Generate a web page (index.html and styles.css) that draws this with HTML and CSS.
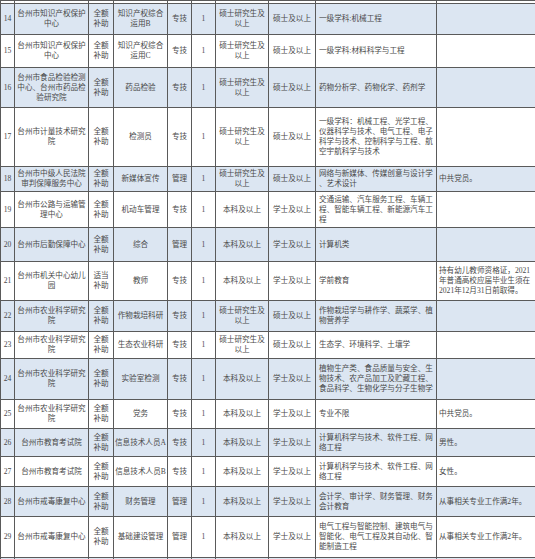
FILE: index.html
```html
<!DOCTYPE html>
<html lang="zh-CN">
<head>
<meta charset="utf-8">
<title>招聘计划表</title>
<link rel="stylesheet" href="styles.css">
</head>
<body>
<table class="grid">
<colgroup>
<col class="c-no"><col class="c-unit"><col class="c-fund"><col class="c-post"><col class="c-type"><col class="c-num"><col class="c-edu"><col class="c-deg"><col class="c-major"><col class="c-other">
</colgroup>
<tbody>
<tr class="h-top"><td></td><td></td><td></td><td></td><td></td><td></td><td></td><td></td><td></td><td></td></tr>
<tr class="blue h31"><td>14</td><td>台州市知识产权保护<br>中心</td><td>全额<br>补助</td><td>知识产权综合<br>运用B</td><td>专技</td><td>1</td><td>硕士研究生及<br>以上</td><td>硕士及以上</td><td class="left">一级学科:机械工程</td><td class="left2"></td></tr>
<tr class="h33"><td>15</td><td>台州市知识产权保护<br>中心</td><td>全额<br>补助</td><td>知识产权综合<br>运用C</td><td>专技</td><td>1</td><td>硕士研究生及<br>以上</td><td>硕士及以上</td><td class="left">一级学科:材料科学与工程</td><td class="left2"></td></tr>
<tr class="blue h40"><td>16</td><td>台州市食品检验检测<br>中心、台州市药品检<br>验研究院</td><td>全额<br>补助</td><td>药品检验</td><td>专技</td><td>1</td><td>硕士研究生及<br>以上</td><td>硕士及以上</td><td class="left">药物分析学、药物化学、药剂学</td><td class="left2"></td></tr>
<tr class="h59"><td>17</td><td>台州市计量技术研究<br>院</td><td>全额<br>补助</td><td>检测员</td><td>专技</td><td>1</td><td>硕士研究生及<br>以上</td><td>硕士及以上</td><td class="left">一级学科：机械工程、光学工程、<br>仪器科学与技术、电气工程、电子<br>科学与技术、控制科学与工程、航<br>空宇航科学与技术</td><td class="left2"></td></tr>
<tr class="blue h25"><td>18</td><td>台州市中级人民法院<br>审判保障服务中心</td><td>全额<br>补助</td><td>新媒体宣传</td><td>管理</td><td>1</td><td>硕士研究生及<br>以上</td><td>硕士及以上</td><td class="left">网络与新媒体、传媒创意与设计学<br>、艺术设计</td><td class="left2">中共党员。</td></tr>
<tr class="h36"><td>19</td><td>台州市公路与运输管<br>理中心</td><td>全额<br>补助</td><td>机动车管理</td><td>专技</td><td>1</td><td>本科及以上</td><td>学士及以上</td><td class="left">交通运输、汽车服务工程、车辆工<br>程、智能车辆工程、新能源汽车工<br>程</td><td class="left2"></td></tr>
<tr class="blue h34"><td>20</td><td>台州市后勤保障中心</td><td>全额<br>补助</td><td>综合</td><td>管理</td><td>1</td><td>本科及以上</td><td>学士及以上</td><td class="left">计算机类</td><td class="left2"></td></tr>
<tr class="h39"><td>21</td><td>台州市机关中心幼儿<br>园</td><td>适当<br>补助</td><td>教师</td><td>专技</td><td>1</td><td>本科及以上</td><td>学士及以上</td><td class="left">学前教育</td><td class="left2">持有幼儿教师资格证，2021<br>年普通高校应届毕业生须在<br>2021年12月31日前取得。</td></tr>
<tr class="blue h31"><td>22</td><td>台州市农业科学研究<br>院</td><td>全额<br>补助</td><td>作物栽培科研</td><td>专技</td><td>1</td><td>硕士研究生及<br>以上</td><td>硕士及以上</td><td class="left">作物栽培学与耕作学、蔬菜学、植<br>物营养学</td><td class="left2"></td></tr>
<tr class="h27"><td>23</td><td>台州市农业科学研究<br>院</td><td>全额<br>补助</td><td>生态农业科研</td><td>专技</td><td>1</td><td>硕士研究生及<br>以上</td><td>硕士及以上</td><td class="left">生态学、环境科学、土壤学</td><td class="left2"></td></tr>
<tr class="blue h41"><td>24</td><td>台州市农业科学研究<br>院</td><td>全额<br>补助</td><td>实验室检测</td><td>专技</td><td>1</td><td>本科及以上</td><td>学士及以上</td><td class="left">植物生产类、食品质量与安全、生<br>物技术、农产品加工及贮藏工程、<br>食品科学、生物化学与分子生物学</td><td class="left2"></td></tr>
<tr class="h29"><td>25</td><td>台州市农业科学研究<br>院</td><td>全额<br>补助</td><td>党务</td><td>专技</td><td>1</td><td>本科及以上</td><td>学士及以上</td><td class="left">专业不限</td><td class="left2">中共党员。</td></tr>
<tr class="blue h28"><td>26</td><td>台州市教育考试院</td><td>全额<br>补助</td><td>信息技术人员A</td><td>专技</td><td>1</td><td>本科及以上</td><td>学士及以上</td><td class="left">计算机科学与技术、软件工程、网<br>络工程</td><td class="left2">男性。</td></tr>
<tr class="h30"><td>27</td><td>台州市教育考试院</td><td>全额<br>补助</td><td>信息技术人员B</td><td>专技</td><td>1</td><td>本科及以上</td><td>学士及以上</td><td class="left">计算机科学与技术、软件工程、网<br>络工程</td><td class="left2">女性。</td></tr>
<tr class="blue h30"><td>28</td><td>台州市戒毒康复中心</td><td>全额<br>补助</td><td>财务管理</td><td>管理</td><td>1</td><td>本科及以上</td><td>学士及以上</td><td class="left">会计学、审计学、财务管理、财务<br>会计教育</td><td class="left2">从事相关专业工作满2年。</td></tr>
<tr class="h41"><td>29</td><td>台州市戒毒康复中心</td><td>全额<br>补助</td><td>基础建设管理</td><td>管理</td><td>1</td><td>本科及以上</td><td>学士及以上</td><td class="left">电气工程与智能控制、建筑电气与<br>智能化、电气工程及其自动化、智<br>能制造工程</td><td class="left2">从事相关专业工作满2年。</td></tr>
<tr class="blue h-bottom"><td></td><td></td><td></td><td></td><td></td><td></td><td></td><td></td><td></td><td></td></tr>
</tbody>
</table>
</body>
</html>
```

FILE: styles.css
```css
html, body {
  margin: 0;
  padding: 0;
  background: #ffffff;
}

body {
  width: 535px;
  height: 559px;
  overflow: hidden;
}

.grid {
  border-collapse: collapse;
  table-layout: fixed;
  width: 535px;
  font-family: "Liberation Serif", "Noto Sans CJK SC", serif;
  font-size: 7.6px;
  line-height: 10px;
  color: #4a4a4a;
}

.grid td {
  border: 1px solid #5a5a5a;
  padding: 0 1px;
  text-align: center;
  vertical-align: middle;
  white-space: nowrap;
  overflow: hidden;
}

.grid td.left {
  text-align: left;
  padding-left: 3px;
}

.grid td.left2 {
  text-align: left;
  padding-left: 2px;
}

.c-no { width: 14px; }
.c-unit { width: 74px; }
.c-fund { width: 25px; }
.c-post { width: 54px; }
.c-type { width: 24px; }
.c-num { width: 24px; }
.c-edu { width: 53px; }
.c-deg { width: 47px; }
.c-major { width: 121px; }
.c-other { width: 99px; }

.blue td { background: #dce6f2; }

.h-top { height: 3px; }
.h-bottom { height: 8px; }
.h25 { height: 25px; }
.h27 { height: 27px; }
.h28 { height: 28px; }
.h29 { height: 29px; }
.h30 { height: 30px; }
.h31 { height: 31px; }
.h33 { height: 33px; }
.h34 { height: 34px; }
.h36 { height: 36px; }
.h39 { height: 39px; }
.h40 { height: 40px; }
.h41 { height: 41px; }
.h59 { height: 59px; }
```
